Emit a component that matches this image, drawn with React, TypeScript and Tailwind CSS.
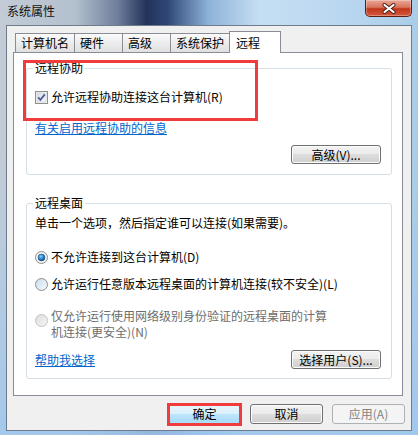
import React from "react";

const Checkbox = () => (
  <svg width="13" height="13" viewBox="0 0 13 13" className="shrink-0">
    <defs>
      <linearGradient id="cb" x1="0" y1="0" x2="1" y2="1">
        <stop offset="0" stopColor="#d8dce4" />
        <stop offset="1" stopColor="#fbfbfc" />
      </linearGradient>
    </defs>
    <rect x="0.5" y="0.5" width="12" height="12" fill="#f6f6f6" stroke="#8f8f8f" />
    <rect x="2" y="2" width="9" height="9" fill="url(#cb)" stroke="#c4c9d2" strokeWidth="0.6" />
    <path d="M3.2 6.4 L5.4 8.9 L9.8 3.4" stroke="#4a5f97" strokeWidth="1.8" fill="none" />
  </svg>
);

const Radio = ({ checked, disabled }: { checked?: boolean; disabled?: boolean }) => (
  <svg width="13" height="13" viewBox="0 0 13 13" className="shrink-0">
    <defs>
      <linearGradient id="rbg" x1="0" y1="0" x2="1" y2="1">
        <stop offset="0" stopColor="#c9dcec" />
        <stop offset="1" stopColor="#f4f9fd" />
      </linearGradient>
      <radialGradient id="rdot" cx="0.4" cy="0.35" r="0.7">
        <stop offset="0" stopColor="#8fd3f8" />
        <stop offset="0.6" stopColor="#1f7ccb" />
        <stop offset="1" stopColor="#0b3f78" />
      </radialGradient>
      <linearGradient id="rdis" x1="0" y1="0" x2="1" y2="1">
        <stop offset="0" stopColor="#dcdcdc" />
        <stop offset="1" stopColor="#f7f7f7" />
      </linearGradient>
    </defs>
    <circle
      cx="6.5"
      cy="6.5"
      r="6"
      fill={disabled ? "url(#rdis)" : checked ? "#f3f3f3" : "url(#rbg)"}
      stroke={disabled ? "#c2c2c2" : "#8e8f8f"}
    />
    {checked && <circle cx="6.5" cy="6.5" r="3.4" fill="url(#rdot)" stroke="#174a80" strokeWidth="0.6" />}
  </svg>
);

const Button = ({
  children,
  width,
  variant = "normal",
}: {
  children: React.ReactNode;
  width: string;
  variant?: "normal" | "default" | "disabled";
}) => {
  const look =
    variant === "default"
      ? "border-[#3c7fb1] bg-[linear-gradient(180deg,#eaf6fd_0%,#d9f0fc_50%,#bee6fd_50%,#a7d9f5_100%)] shadow-[inset_0_0_0_1px_#a6e1fb] text-black"
      : variant === "disabled"
      ? "border-[#adb2b5] bg-[#f4f4f4] text-[#838383]"
      : "border-[#707070] bg-[linear-gradient(180deg,#f2f2f2_0%,#ebebeb_50%,#dddddd_50%,#cfcfcf_100%)] shadow-[inset_0_0_0_1px_#fcfcfc] text-black";
  return (
    <div className={`${width} h-full border rounded-[3px] flex items-center justify-center leading-[14px] ${look}`}>
      {children}
    </div>
  );
};

const Group = ({ title, children, className }: { title: string; children: React.ReactNode; className: string }) => (
  <fieldset className={`ml-[12px] w-[366px] border border-[#d5dfe5] rounded-[3px] p-0 m-0 ${className}`}>
    <legend className="ml-[6px] px-[2px] leading-[14px]">{title}</legend>
    <div className="pl-[8px] pr-[10px]">{children}</div>
  </fieldset>
);

const tabs = [
  { label: "计算机名", w: "w-[60px]" },
  { label: "硬件", w: "w-[49px]" },
  { label: "高级", w: "w-[49px]" },
  { label: "系统保护", w: "w-[60px]" },
];

export default function App() {
  return (
    <div className="w-[418px] h-[435px] relative flex flex-col text-[12px] text-black font-['Noto_Sans_CJK_SC','Microsoft_YaHei',sans-serif] bg-[linear-gradient(180deg,rgba(255,255,255,0)_0%,rgba(255,255,255,0)_35%,rgba(160,200,238,0.9)_100%),linear-gradient(90deg,#c3ccd6_0%,#b3c0ce_18%,#6f7f9c_28%,#23335a_35%,#2e4676_40%,#8fb3d8_50%,#c5def3_62%,#bcd8f1_80%,#a9cde9_100%)]">
      {/* title bar */}
      <div className="h-[25px] flex items-start justify-between pl-[7px] pr-[6px] shrink-0">
        <span className="mt-[4px] leading-[14px] text-[#111]">系统属性</span>
        <div className="w-[47px] h-[17px] rounded-b-[5px] border border-t-0 border-[#5c1e14] bg-[linear-gradient(180deg,#eba797_0%,#d9745c_45%,#c0361c_55%,#d5593c_100%)] shadow-[inset_0_0_0_1px_rgba(255,255,255,0.3)] flex items-center justify-center">
          <svg width="14" height="11" viewBox="0 0 14 11">
            <path d="M2.5 2 L11.5 9 M11.5 2 L2.5 9" stroke="#4a1c14" strokeWidth="4" strokeLinecap="round" />
            <path d="M2.5 2 L11.5 9 M11.5 2 L2.5 9" stroke="#ffffff" strokeWidth="2.2" strokeLinecap="round" />
          </svg>
        </div>
      </div>

      {/* client area */}
      <div className="mx-[6px] mb-[4px] flex-1 border border-[#6d7b8b] bg-[#f0f0f0] flex flex-col">
        {/* tabs */}
        <div className="h-[26px] pt-[5px] pl-[8px] flex items-end">
          {tabs.map((t, i) => (
            <div
              key={t.label}
              className={`${t.w} h-[19px] ${i > 0 ? "-ml-px" : ""} border border-b-0 border-[#898c95] bg-[linear-gradient(180deg,#fbfbfb_0%,#ececec_50%,#e0e0e0_100%)] pl-[5px] leading-[18px]`}
            >
              {t.label}
            </div>
          ))}
          <div className="w-[52px] h-[22px] -ml-px -mb-px relative z-10 border border-b-0 border-[#898c95] bg-white pl-[6px] pt-[2px] leading-[18px]">
            远程
          </div>
        </div>

        {/* panel */}
        <div className="ml-[6px] w-[390px] h-[344px] border border-[#898c95] bg-white flex flex-col">
          <Group title="远程协助" className="mt-[8px]">
            <div className="mt-[15px] h-[14px] flex items-center gap-[3px] leading-[14px]">
              <Checkbox />
              <span>允许远程协助连接这台计算机(R)</span>
            </div>
            <div className="mt-[17px] leading-[14px]">
              <span className="text-[#0066cc] underline">有关启用远程协助的信息</span>
            </div>
            <div className="mt-[10px] h-[19px] flex justify-end">
              <Button width="w-[90px]">高级(V)...</Button>
            </div>
            <div className="h-[10px]" />
          </Group>

          <Group title="远程桌面" className="mt-[21px]">
            <div className="mt-[6px] leading-[14px]">单击一个选项，然后指定谁可以连接(如果需要)。</div>
            <div className="mt-[20px] h-[14px] flex items-center gap-[3px] leading-[14px]">
              <Radio checked />
              <span>不允许连接到这台计算机(D)</span>
            </div>
            <div className="mt-[13px] h-[14px] flex items-center gap-[3px] leading-[14px]">
              <Radio />
              <span>允许运行任意版本远程桌面的计算机连接(较不安全)(L)</span>
            </div>
            <div className="mt-[17px] flex items-start gap-[3px] text-[#6d6d6d]">
              <div className="mt-[6px]">
                <Radio disabled />
              </div>
              <div className="flex flex-col">
                <div className="h-[16px] leading-[16px]">仅允许运行使用网络级别身份验证的远程桌面的计算</div>
                <div className="h-[16px] leading-[16px]">机连接(更安全)(N)</div>
              </div>
            </div>
            <div className="mt-[10px] h-[19px] flex items-center justify-between">
              <span className="text-[#0066cc] underline leading-[14px]">帮助我选择</span>
              <Button width="w-[90px]">选择用户(S)...</Button>
            </div>
            <div className="h-[9px]" />
          </Group>
        </div>

        {/* dialog buttons */}
        <div className="mt-[8px] h-[20px] pr-[6px] flex justify-end gap-[9px]">
          <div className="relative h-full">
            <Button width="w-[73px]" variant="default">
              确定
            </Button>
            <div className="absolute -left-[1px] -right-[1px] -top-[1px] -bottom-[2px] border-[3px] border-[#f03c3c]" />
          </div>
          <Button width="w-[73px]">取消</Button>
          <Button width="w-[73px]" variant="disabled">
            应用(A)
          </Button>
        </div>
      </div>

      {/* red annotation around remote assistance */}
      <div className="absolute left-[23px] top-[60px] w-[235px] h-[61px] border-[3px] border-[#f03c3c]" />
    </div>
  );
}
